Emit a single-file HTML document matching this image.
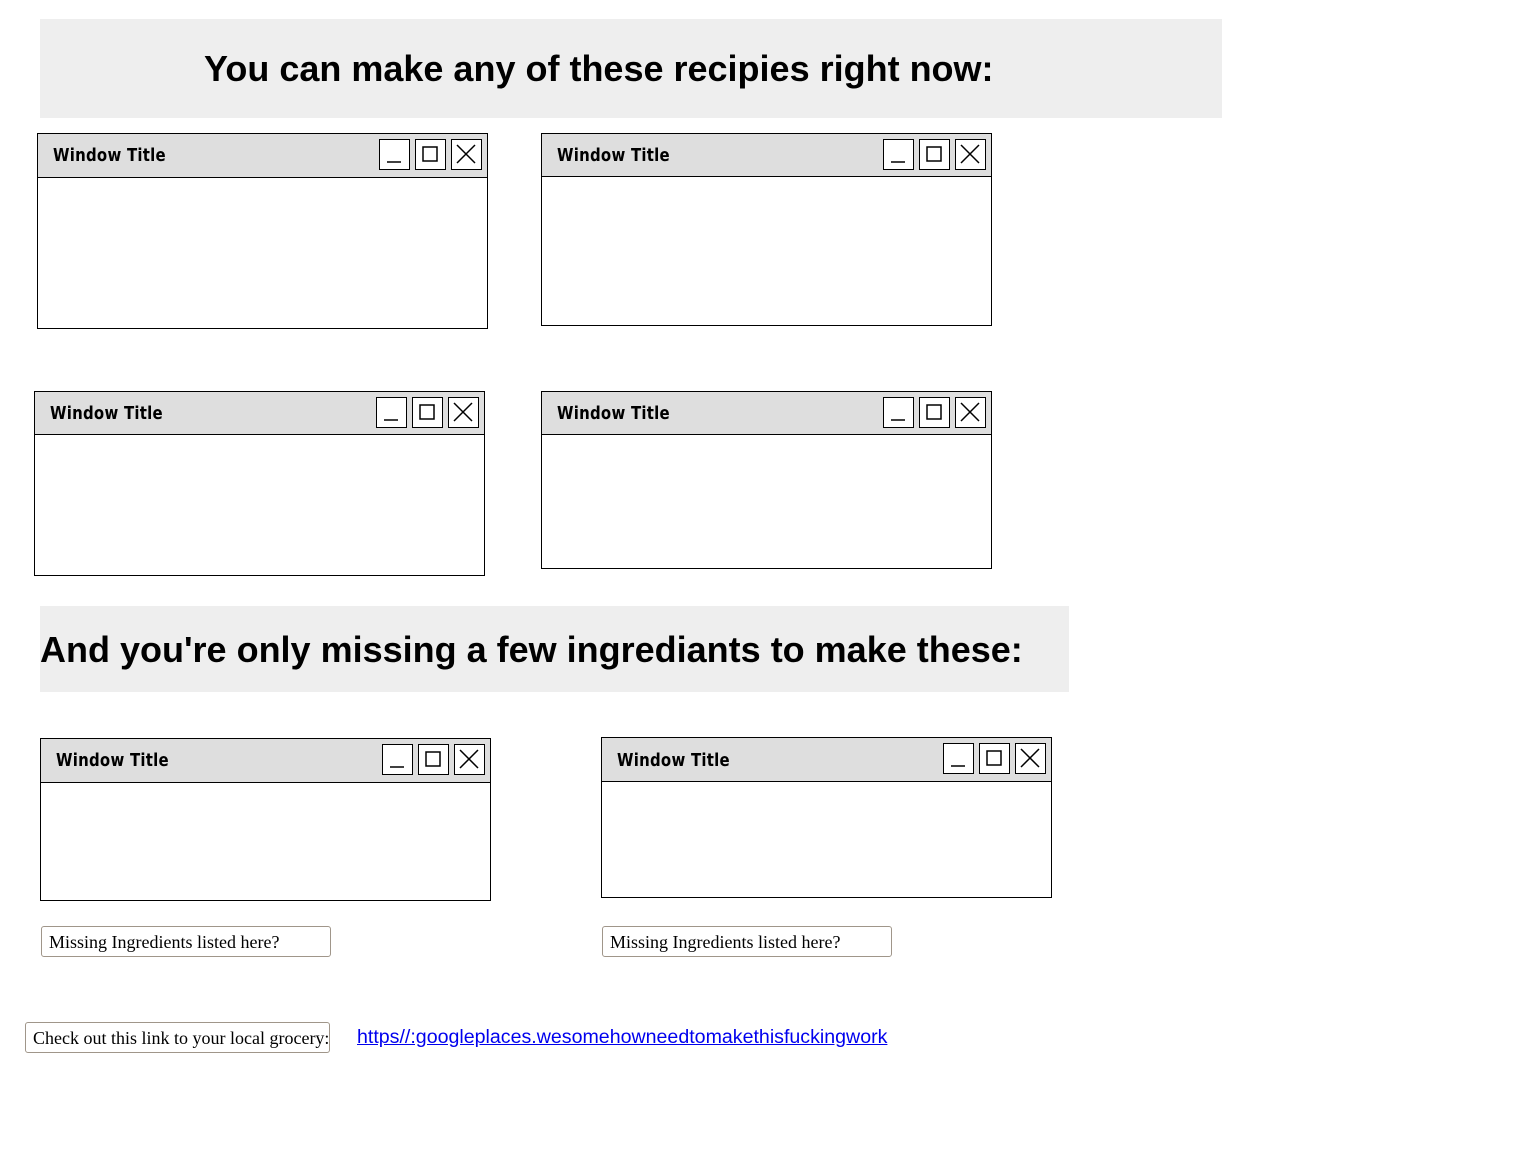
<!DOCTYPE html>
<html><head><meta charset="utf-8"><style>
body{margin:0;width:1536px;height:1152px;background:#fff;position:relative;font-family:"Liberation Sans",Arial,sans-serif;overflow:hidden}
.h{position:absolute;background:#eeeeee}
.h span{position:absolute;font-weight:bold;font-size:36px;color:#000;white-space:nowrap;line-height:1}
.w{position:absolute;border:1.5px solid #000;background:#fff;box-sizing:border-box}
.t{position:absolute;left:0;right:0;top:0;background:#dedede;border-bottom:1.5px solid #000;box-sizing:border-box}
.t span{position:absolute;left:15px;font-size:18px;font-weight:bold;font-family:"Comic Sans MS","DejaVu Sans","Liberation Sans",sans-serif;letter-spacing:0.3px;transform:scaleX(0.83);transform-origin:left}
.b{position:absolute;top:5px;width:31px;height:31px;border:1.5px solid #000;background:#fff;box-sizing:border-box}
.b svg{position:absolute;left:0;top:0}
.i{position:absolute;border:1.5px solid #a0968a;border-radius:3px;box-sizing:border-box;font-family:"Liberation Serif",serif;font-size:18px;color:#000;padding-left:7px;line-height:31px;white-space:nowrap;overflow:hidden}
a{position:absolute;color:#0000ee;font-size:19.6px;text-decoration:underline;white-space:nowrap}
</style></head><body>
<div class="h" style="left:40px;top:19px;width:1182px;height:99px"><span style="left:164px;top:32px">You can make any of these recipies right now:</span></div>
<div class="h" style="left:40px;top:606px;width:1029px;height:86px"><span style="left:0;top:26px">And you're only missing a few ingrediants to make these:</span></div>

<div class="w" style="left:37px;top:133px;width:451px;height:196px"><div class="t" style="height:44px"><span style="top:11px">Window Title</span>
<div class="b" style="left:341px"><svg width="28" height="28"><line x1="7" y1="22" x2="21" y2="22" stroke="#000" stroke-width="1.5"/></svg></div>
<div class="b" style="left:377px"><svg width="28" height="28"><rect x="7" y="7" width="14" height="14" fill="none" stroke="#000" stroke-width="1.5"/></svg></div>
<div class="b" style="left:413px"><svg width="28" height="28"><path d="M5 5L23 23M23 5L5 23" stroke="#000" stroke-width="1.5"/></svg></div></div></div>

<div class="w" style="left:541px;top:133px;width:451px;height:193px"><div class="t" style="height:43px"><span style="top:11px">Window Title</span>
<div class="b" style="left:341px"><svg width="28" height="28"><line x1="7" y1="22" x2="21" y2="22" stroke="#000" stroke-width="1.5"/></svg></div>
<div class="b" style="left:377px"><svg width="28" height="28"><rect x="7" y="7" width="14" height="14" fill="none" stroke="#000" stroke-width="1.5"/></svg></div>
<div class="b" style="left:413px"><svg width="28" height="28"><path d="M5 5L23 23M23 5L5 23" stroke="#000" stroke-width="1.5"/></svg></div></div></div>

<div class="w" style="left:34px;top:391px;width:451px;height:185px"><div class="t" style="height:43px"><span style="top:11px">Window Title</span>
<div class="b" style="left:341px"><svg width="28" height="28"><line x1="7" y1="22" x2="21" y2="22" stroke="#000" stroke-width="1.5"/></svg></div>
<div class="b" style="left:377px"><svg width="28" height="28"><rect x="7" y="7" width="14" height="14" fill="none" stroke="#000" stroke-width="1.5"/></svg></div>
<div class="b" style="left:413px"><svg width="28" height="28"><path d="M5 5L23 23M23 5L5 23" stroke="#000" stroke-width="1.5"/></svg></div></div></div>

<div class="w" style="left:541px;top:391px;width:451px;height:178px"><div class="t" style="height:43px"><span style="top:11px">Window Title</span>
<div class="b" style="left:341px"><svg width="28" height="28"><line x1="7" y1="22" x2="21" y2="22" stroke="#000" stroke-width="1.5"/></svg></div>
<div class="b" style="left:377px"><svg width="28" height="28"><rect x="7" y="7" width="14" height="14" fill="none" stroke="#000" stroke-width="1.5"/></svg></div>
<div class="b" style="left:413px"><svg width="28" height="28"><path d="M5 5L23 23M23 5L5 23" stroke="#000" stroke-width="1.5"/></svg></div></div></div>

<div class="w" style="left:40px;top:738px;width:451px;height:163px"><div class="t" style="height:44px"><span style="top:11px">Window Title</span>
<div class="b" style="left:341px"><svg width="28" height="28"><line x1="7" y1="22" x2="21" y2="22" stroke="#000" stroke-width="1.5"/></svg></div>
<div class="b" style="left:377px"><svg width="28" height="28"><rect x="7" y="7" width="14" height="14" fill="none" stroke="#000" stroke-width="1.5"/></svg></div>
<div class="b" style="left:413px"><svg width="28" height="28"><path d="M5 5L23 23M23 5L5 23" stroke="#000" stroke-width="1.5"/></svg></div></div></div>

<div class="w" style="left:601px;top:737px;width:451px;height:161px"><div class="t" style="height:44px"><span style="top:12px">Window Title</span>
<div class="b" style="left:341px"><svg width="28" height="28"><line x1="7" y1="22" x2="21" y2="22" stroke="#000" stroke-width="1.5"/></svg></div>
<div class="b" style="left:377px"><svg width="28" height="28"><rect x="7" y="7" width="14" height="14" fill="none" stroke="#000" stroke-width="1.5"/></svg></div>
<div class="b" style="left:413px"><svg width="28" height="28"><path d="M5 5L23 23M23 5L5 23" stroke="#000" stroke-width="1.5"/></svg></div></div></div>

<div class="i" style="left:41px;top:926px;width:290px;height:31px">Missing Ingredients listed here?</div>
<div class="i" style="left:602px;top:926px;width:290px;height:31px">Missing Ingredients listed here?</div>
<div class="i" style="left:25px;top:1022px;width:305px;height:31px">Check out this link to your local grocery:</div>
<a style="left:357px;top:1026px">https//:googleplaces.wesomehowneedtomakethisfuckingwork</a>
</body></html>
